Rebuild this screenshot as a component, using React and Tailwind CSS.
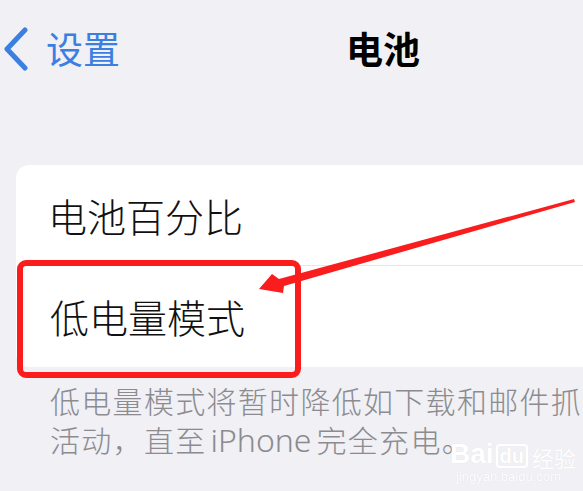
import React from "react";

const F = { fontFamily: '"Noto Sans CJK SC", "Noto Sans", sans-serif' };

export default function App() {
  return (
    <div
      className="relative w-[583px] h-[491px] overflow-hidden bg-[#f0f0f5]"
      style={F}
    >
      {/* Nav bar */}
      <div className="relative flex items-center h-[97px]">
        <div className="flex items-center pl-[3px]">
          <svg width="26" height="44" viewBox="0 0 26 44" className="shrink-0">
            <path
              d="M22 3 L4 22 L22 41"
              fill="none"
              stroke="#3b7fe1"
              strokeWidth="5"
              strokeLinecap="round"
              strokeLinejoin="round"
            />
          </svg>
          <span className="ml-[17px] text-[37px] leading-none text-[#3b7fe1]">设置</span>
        </div>
        <div className="absolute left-[346px] top-0 h-full flex items-center">
          <span className="text-[37px] leading-none font-bold text-black">电池</span>
        </div>
      </div>

      {/* Card */}
      <div className="mt-[68px] ml-[16px] bg-white rounded-l-[13px]">
        <div className="h-[100px] flex items-center pl-[32px] text-[39px] leading-none font-light text-[#111]">
          电池百分比
        </div>
        <div className="ml-[34px] h-px bg-[#e6e6eb]" />
        <div className="h-[101px] flex items-center pl-[34px] text-[39px] leading-none font-light text-[#111]">
          低电量模式
        </div>
      </div>

      {/* Footer */}
      <div className="pl-[50px] pt-[14px] text-[30px] leading-[39px] tracking-[1.3px] font-light text-[#8b8b90] whitespace-nowrap">
        <div>低电量模式将暂时降低如下载和邮件抓取等</div>
        <div>
          活动，直至
          <span
            className="inline-block w-[110px] pl-[4px] text-[32px] tracking-normal"
            style={{ fontFamily: '"Noto Sans", sans-serif' }}
          >
            iPhone
          </span>
          完全充电。
        </div>
      </div>

      {/* Red annotation box */}
      <div className="absolute left-[17px] top-[260px] w-[284px] h-[118px] border-[6px] border-[#fb1c1c] rounded-[9px]" />

      {/* Red arrow */}
      <svg className="absolute left-0 top-0" width="583" height="491" viewBox="0 0 583 491">
        <polygon
          points="574,199 575,202 284,286 283,293 259,289 272,274 279,279"
          fill="#f91d1d"
        />
      </svg>

      {/* Watermark */}
      <div
        className="absolute left-[450px] top-[440px] flex items-end text-white"
        style={{ fontFamily: '"Liberation Sans", sans-serif', textShadow: "0 0 1px rgba(0,0,0,0.08)" }}
      >
        <span className="text-[28px] leading-none font-bold">Bai</span>
        <span className="mx-[2px] px-[2px] rounded-[4px] border-2 border-white text-[20px] leading-none font-bold">du</span>
        <span className="ml-[2px] text-[22px] leading-none" style={F}>经验</span>
      </div>
      <div
        className="absolute left-[456px] top-[470px] text-[13px] leading-none text-white"
        style={{ fontFamily: '"Liberation Sans", sans-serif', textShadow: "0 0 1px rgba(0,0,0,0.1)" }}
      >
        jingyan.baidu.com
      </div>
    </div>
  );
}
